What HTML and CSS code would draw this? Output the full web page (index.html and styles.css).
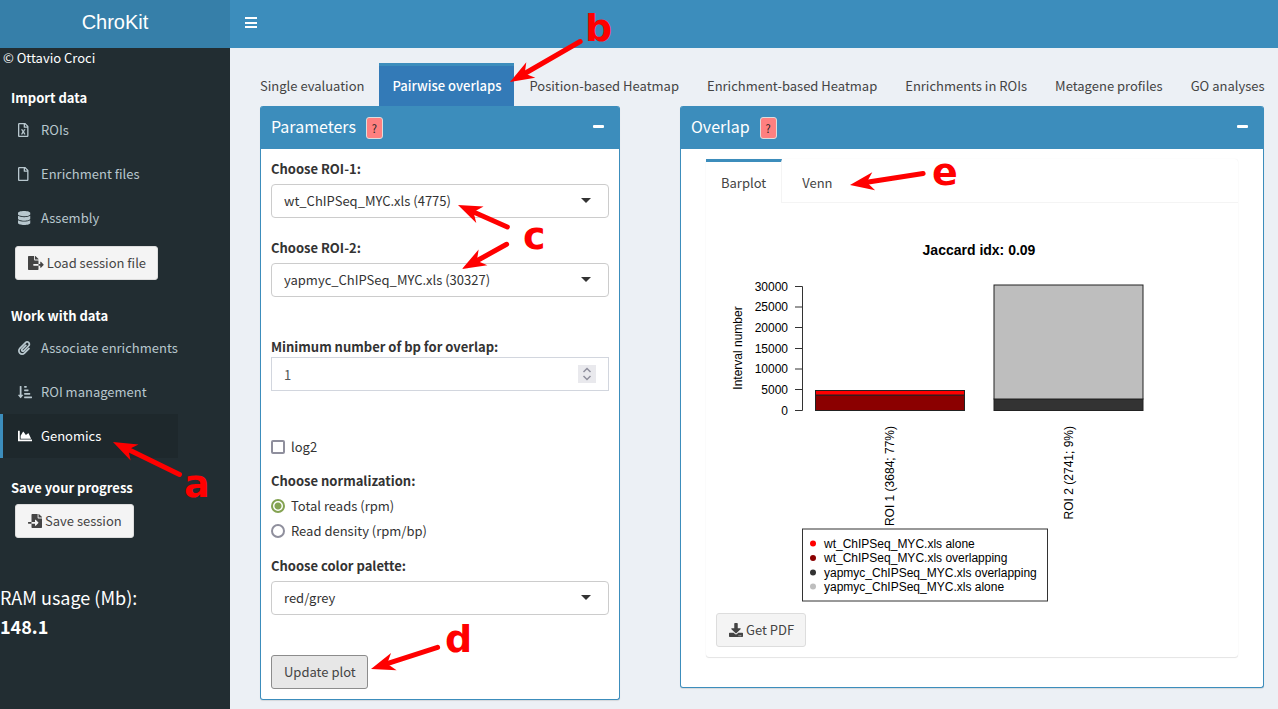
FILE: index.html
```html
<!DOCTYPE html>
<html lang="en">
<head>
<meta charset="utf-8">
<title>ChroKit</title>
<link rel="stylesheet" href="styles.css">
</head>
<body>
<header class="topbar">
  <div class="logo">ChroKit</div>
  <button class="menu-toggle" type="button" aria-label="Toggle navigation">
    <svg width="12" height="12" viewBox="0 0 12 12"><path d="M0 0h12v2H0zM0 5h12v2H0zM0 9h12v2H0z"/></svg>
  </button>
</header>
<div class="shell">
  <aside class="sidebar">
    <p class="copyright">© Ottavio Croci</p>
    <h2 class="side-title">Import data</h2>
    <nav class="side-nav">
      <a class="side-link" href="#rois"><svg class="icon" viewBox="0 0 384 512" preserveAspectRatio="xMinYMid"><path d="M369.9 97.9L286 14C277 5 264.8-.1 252.1-.1H48C21.5 0 0 21.5 0 48v416c0 26.5 21.5 48 48 48h288c26.5 0 48-21.5 48-48V131.900c0-12.700-5.100-25-14.100-34zM332.100 128H256V51.900l76.100 76.100zM48 464V48h160v104c0 13.300 10.700 24 24 24h104v288H48zm212-240h-28.800c-4.400 0-8.400 2.400-10.500 6.300-18 33.100-22.200 42.400-28.600 57.700-13.900-29.100-6.900-17.300-28.600-57.700-2.100-3.900-6.200-6.300-10.600-6.300H124c-9.300 0-15 10-10.400 18l46.300 78-46.300 78c-4.700 8 1.100 18 10.400 18h28.900c4.400 0 8.400-2.400 10.500-6.300 21.700-40 23-45 28.600-57.700 14.900 30.200 5.900 15.900 28.600 57.700 2.100 3.900 6.200 6.300 10.600 6.300H260c9.300 0 15-10 10.400-18L224 320c.7-1.100 30.300-50.500 46.300-78 4.700-8-1.100-18-10.300-18z"/></svg>ROIs</a>
      <a class="side-link" href="#enrichment"><svg class="icon" viewBox="0 0 384 512" preserveAspectRatio="xMinYMid"><path d="M369.900 97.900L286 14C277 5 264.800-.1 252.100-.1H48C21.500 0 0 21.500 0 48v416c0 26.500 21.500 48 48 48h288c26.500 0 48-21.500 48-48V131.900c0-12.700-5.100-25-14.100-34zM332.100 128H256V51.900l76.100 76.100zM48 464V48h160v104c0 13.300 10.700 24 24 24h104v288H48z"/></svg>Enrichment files</a>
      <a class="side-link" href="#assembly"><svg class="icon" viewBox="0 0 448 512" preserveAspectRatio="xMinYMid"><path d="M448 73.143v45.714C448 159.143 347.667 192 224 192S0 159.143 0 118.857V73.143C0 32.857 100.333 0 224 0s224 32.857 224 73.143zM448 176v102.857C448 319.143 347.667 352 224 352S0 319.143 0 278.857V176c48.125 33.143 136.208 48.572 224 48.572S399.874 209.143 448 176zm0 160v102.857C448 479.143 347.667 512 224 512S0 479.143 0 438.857V336c48.125 33.143 136.208 48.572 224 48.572S399.874 369.143 448 336z"/></svg>Assembly</a>
    </nav>
    <button class="btn side-btn" type="button"><svg class="icon" viewBox="0 0 576 512"><path d="M384 121.900c0-6.300-2.500-12.400-7-16.900L279.100 7c-4.500-4.500-10.600-7-17-7H256v128h128zM571 308l-95.700-96.400c-10.100-10.100-27.400-3-27.400 11.300V288h-64v64h64v65.200c0 14.300 17.300 21.400 27.400 11.300L571 332c6.600-6.600 6.600-17.400 0-24zm-379 28v-32c0-8.800 7.200-16 16-16h176V160H248c-13.200 0-24-10.800-24-24V0H24C10.700 0 0 10.700 0 24v464c0 13.300 10.700 24 24 24h336c13.300 0 24-10.700 24-24V352H208c-8.800 0-16-7.200-16-16z"/></svg>Load session file</button>
    <h2 class="side-title work-title">Work with data</h2>
    <nav class="side-nav">
      <a class="side-link" href="#associate"><svg class="icon" viewBox="0 0 448 512" preserveAspectRatio="xMinYMid"><path d="M43.246 466.142c-58.430-60.289-57.341-157.511 1.386-217.581L254.392 34c44.316-45.332 116.351-45.336 160.671 0 43.890 44.894 43.943 117.329 0 162.276L232.214 383.128c-29.855 30.537-78.633 30.111-107.982-.998-28.275-29.970-27.368-77.473 1.452-106.953l143.743-146.835c6.182-6.314 16.312-6.422 22.626-.241l22.861 22.379c6.315 6.182 6.422 16.312.241 22.626L171.427 319.927c-4.932 5.045-5.236 13.428-.648 18.292 4.372 4.634 11.245 4.711 15.688.165l182.849-186.851c19.613-20.062 19.613-52.725-.011-72.798-19.189-19.627-49.957-19.637-69.154 0L90.390 293.295c-34.763 35.560-35.299 93.120-1.191 128.313 34.010 35.093 88.985 35.137 123.058.286l172.060-175.999c6.177-6.319 16.307-6.433 22.626-.256l22.877 22.364c6.319 6.177 6.434 16.307.256 22.626l-172.060 175.998c-59.576 60.938-155.943 60.216-214.770-.485z"/></svg>Associate enrichments</a>
      <a class="side-link" href="#management"><svg class="icon" viewBox="0 0 512 512" preserveAspectRatio="xMinYMid"><path d="M240 96h64a16 16 0 0 0 16-16V48a16 16 0 0 0-16-16h-64a16 16 0 0 0-16 16v32a16 16 0 0 0 16 16zm0 128h128a16 16 0 0 0 16-16v-32a16 16 0 0 0-16-16H240a16 16 0 0 0-16 16v32a16 16 0 0 0 16 16zm256 192H240a16 16 0 0 0-16 16v32a16 16 0 0 0 16 16h256a16 16 0 0 0 16-16v-32a16 16 0 0 0-16-16zm-256-64h192a16 16 0 0 0 16-16v-32a16 16 0 0 0-16-16H240a16 16 0 0 0-16 16v32a16 16 0 0 0 16 16zm-64 0h-48V48a16 16 0 0 0-16-16H80a16 16 0 0 0-16 16v304H16c-14.190 0-21.370 17.240-11.290 27.310l80 96a16 16 0 0 0 22.620 0l80-96C197.350 369.260 190.220 352 176 352z"/></svg>ROI management</a>
      <a class="side-link active" href="#genomics"><svg class="icon" viewBox="0 0 512 512" preserveAspectRatio="xMinYMid"><path d="M500 384c6.600 0 12 5.400 12 12v40c0 6.600-5.400 12-12 12H12c-6.600 0-12-5.400-12-12V76c0-6.600 5.400-12 12-12h40c6.600 0 12 5.400 12 12v308h436zM372.700 159.500L288 216l-85.300-113.700c-5.100-6.800-15.500-6.300-19.900 1L96 248v104h384l-89.900-187.800c-3.200-6.500-11.400-8.700-17.400-4.700z"/></svg>Genomics</a>
    </nav>
    <h2 class="side-title">Save your progress</h2>
    <button class="btn side-btn" type="button"><svg class="icon" viewBox="0 0 512 512"><path d="M16 288c-8.800 0-16 7.200-16 16v32c0 8.800 7.200 16 16 16h112v-64zm489-183L407.100 7c-4.500-4.500-10.600-7-17-7H384v128h128v-6.100c0-6.300-2.500-12.400-7-16.900zm-153 31V0H152c-13.300 0-24 10.700-24 24v264h128v-65.200c0-14.300 17.300-21.400 27.400-11.300L379 308c6.600 6.700 6.600 17.400 0 24l-95.700 96.400c-10.100 10.100-27.400 3-27.400-11.300V352H128v136c0 13.300 10.700 24 24 24h336c13.300 0 24-10.700 24-24V160H376c-13.200 0-24-10.800-24-24z"/></svg>Save session</button>
    <div class="ram">RAM usage (Mb):<br><strong>148.1</strong></div>
  </aside>
  <main class="content">
    <nav class="tabs">
      <a class="tab" href="#single">Single evaluation</a>
      <a class="tab active" href="#pairwise">Pairwise overlaps</a>
      <a class="tab" href="#position">Position-based Heatmap</a>
      <a class="tab" href="#enrichment-heatmap">Enrichment-based Heatmap</a>
      <a class="tab" href="#enrichments">Enrichments in ROIs</a>
      <a class="tab" href="#metagene">Metagene profiles</a>
      <a class="tab" href="#go">GO analyses</a>
    </nav>
    <div class="panels">
      <section class="panel">
        <header class="panel-head">
          <h3 class="panel-title">Parameters</h3>
          <button class="help" type="button">?</button>
          <button class="collapse" type="button" aria-label="Collapse"></button>
        </header>
        <form class="params">
          <div class="field">
            <label class="label" for="roi1">Choose ROI-1:</label>
            <div class="select-wrap"><select class="control" id="roi1"><option>wt_ChIPSeq_MYC.xls (4775)</option></select></div>
          </div>
          <div class="field roi2-field">
            <label class="label" for="roi2">Choose ROI-2:</label>
            <div class="select-wrap"><select class="control" id="roi2"><option>yapmyc_ChIPSeq_MYC.xls (30327)</option></select></div>
          </div>
          <div class="field min-field">
            <label class="label" for="minbp">Minimum number of bp for overlap:</label>
            <div class="number-wrap">
              <input class="control number" id="minbp" type="number" value="1">
              <svg class="spinner" viewBox="0 0 18 18"><path d="M5.500 7L9 3.500 12.500 7M5.500 11L9 14.500l3.500-3.500"/></svg>
            </div>
          </div>
          <label class="choice"><input class="check" type="checkbox">log2</label>
          <fieldset class="radios">
            <legend class="label">Choose normalization:</legend>
            <label class="choice"><input class="radio" type="radio" name="norm" checked>Total reads (rpm)</label>
            <label class="choice"><input class="radio" type="radio" name="norm">Read density (rpm/bp)</label>
          </fieldset>
          <div class="field">
            <label class="label" for="palette">Choose color palette:</label>
            <div class="select-wrap"><select class="control" id="palette"><option>red/grey</option></select></div>
          </div>
          <button class="btn update" type="button">Update plot</button>
        </form>
      </section>
      <section class="panel">
        <header class="panel-head">
          <h3 class="panel-title">Overlap</h3>
          <button class="help" type="button">?</button>
          <button class="collapse" type="button" aria-label="Collapse"></button>
        </header>
        <div class="results">
          <div class="tabbox">
            <nav class="inner-tabs">
              <a class="inner-tab active" href="#barplot">Barplot</a>
              <a class="inner-tab" href="#venn">Venn</a>
            </nav>
            <div class="plot-area">
              <svg class="plot" viewBox="0 0 512 400" role="img" aria-label="Interval overlap bar plot">
                <text class="plot-title" x="263" y="42" text-anchor="middle">Jaccard idx: 0.09</text>
                <g text-anchor="end">
                  <text x="72" y="78">30000</text><text x="72" y="98">25000</text><text x="72" y="119">20000</text><text x="72" y="140">15000</text><text x="72" y="160">10000</text><text x="72" y="181">5000</text><text x="72" y="202">0</text>
                </g>
                <text transform="translate(26 135) rotate(-90)" text-anchor="middle">Interval number</text>
                <path class="axis" d="M79 73.500H86.500V197.500H79M79 94h7.500M79 114.500h7.500M79 135.500h7.500M79 156h7.500M79 176.500h7.500"/>
                <g class="bars">
                  <rect x="99.500" y="182" width="149" height="15.500" fill="#8b0000"/>
                  <rect x="99.500" y="177.500" width="149" height="4.500" fill="#f00"/>
                  <rect x="278" y="186" width="149" height="11.500" fill="#333"/>
                  <rect x="278" y="72" width="149" height="114" fill="#bebebe"/>
                </g>
                <g text-anchor="end">
                  <text transform="translate(178 213) rotate(-90)">ROI 1 (3684; 77%)</text>
                  <text transform="translate(357 213) rotate(-90)">ROI 2 (2741; 9%)</text>
                </g>
                <rect class="legend" x="86.500" y="316" width="245" height="72"/>
                <circle cx="97" cy="330.500" r="3" fill="#f00"/><text x="108" y="335">wt_ChIPSeq_MYC.xls alone</text>
                <circle cx="97" cy="345" r="3" fill="#8b0000"/><text x="108" y="349">wt_ChIPSeq_MYC.xls overlapping</text>
                <circle cx="97" cy="359.500" r="3" fill="#333"/><text x="108" y="364">yapmyc_ChIPSeq_MYC.xls overlapping</text>
                <circle cx="97" cy="373.500" r="3" fill="#bebebe"/><text x="108" y="378">yapmyc_ChIPSeq_MYC.xls alone</text>
              </svg>
              <button class="btn" type="button"><svg class="icon" viewBox="0 0 512 512"><path d="M216 0h80c13.300 0 24 10.700 24 24v168h87.700c17.800 0 26.700 21.500 14.100 34.100L269.700 378.300c-7.500 7.500-19.800 7.500-27.300 0L90.100 226.100c-12.600-12.600-3.700-34.100 14.100-34.100H192V24c0-13.300 10.700-24 24-24zm296 376v112c0 13.300-10.700 24-24 24H24c-13.300 0-24-10.700-24-24V376c0-13.300 10.700-24 24-24h146.700l49 49c20.100 20.100 52.500 20.100 72.600 0l49-49H488c13.300 0 24 10.700 24 24zm-124 88c0-11-9-20-20-20s-20 9-20 20 9 20 20 20 20-9 20-20zm64 0c0-11-9-20-20-20s-20 9-20 20 9 20 20 20 20-9 20-20z"/></svg>Get PDF</button>
            </div>
          </div>
        </div>
      </section>
    </div>
  </main>
</div>
<svg class="annotations">
  <defs><path id="head" d="M0 0L24-9 17 0l7 9z"/></defs>
  <g transform="translate(113 442) rotate(26)"><path class="shaft" d="M17 0h57"/><use href="#head"/></g>
  <g transform="translate(510 82) rotate(-30)"><path class="shaft" d="M17 0h64"/><use href="#head"/></g>
  <g transform="translate(458 205) rotate(24)"><path class="shaft" d="M17 0h37"/><use href="#head"/></g>
  <g transform="translate(462 269) rotate(-29)"><path class="shaft" d="M17 0h34"/><use href="#head"/></g>
  <g transform="translate(371 669) rotate(-18)"><path class="shaft" d="M17 0h53"/><use href="#head"/></g>
  <g transform="translate(850 185) rotate(-9)"><path class="shaft" d="M17 0h57"/><use href="#head"/></g>
  <text x="184" y="497">a</text>
  <text x="585" y="41">b</text>
  <text x="523" y="249">c</text>
  <text x="445" y="652">d</text>
  <text x="932" y="185">e</text>
</svg>
</body>
</html>
```
FILE: styles.css
```css
*, *::before, *::after { box-sizing: border-box; }

body {
  position: relative;
  display: flex;
  flex-direction: column;
  min-height: 100vh;
  margin: 0;
  background: #ecf0f5;
  color: #333;
  font: 13px/20px "Source Sans Pro", "Noto Sans CJK JP", "Noto Sans", sans-serif;
}

a { color: inherit; text-decoration: none; }
button, input, select { font: inherit; color: inherit; }
h2, h3, p { margin: 0; }

.topbar { display: flex; height: 48px; background: #3c8dbc; color: #fff; }
.logo {
  width: 230px;
  background: #367fa9;
  font: 20px/44px "Liberation Sans", Arial, sans-serif;
  text-align: center;
}
.menu-toggle {
  display: flex;
  align-items: center;
  padding: 0 15px 2px;
  border: 0;
  background: none;
  fill: #fff;
}

.shell { display: flex; flex: 1; }
.sidebar { flex: 0 0 230px; background: #222d32; color: #fff; }
.copyright { padding: 0 3px; }
.side-title { padding: 20px 11px 0; font-size: 13px; line-height: 20px; font-weight: 700; }
.side-nav { width: 178px; }
.side-link {
  display: flex;
  align-items: center;
  height: 44px;
  padding-left: 15px;
  border-left: 3px solid transparent;
  color: #b8c7ce;
  white-space: nowrap;
}
.side-link.active { border-color: #3c8dbc; background: #1e282c; color: #fff; }
.icon { height: 14px; fill: currentColor; }
.side-link .icon { flex: none; width: 23px; }

.btn {
  display: inline-flex;
  align-items: center;
  gap: 3px;
  height: 34px;
  padding: 0 11px 0 12px;
  border: 1px solid #ddd;
  border-radius: 3px;
  background: #f4f4f4;
  color: #444;
}
.side-btn { margin: 6px 15px 0; }
.work-title { padding-top: 26px; }
.ram { margin-top: 45px; font-size: 18px; line-height: 29px; }

.content { flex: 1; min-width: 0; padding-top: 15px; }
.tabs { display: flex; gap: 2px; padding-left: 17px; }
.tab {
  padding: 10px 13px;
  border-top: 3px solid transparent;
  color: #444;
  white-space: nowrap;
}
.tab.active { border-color: #3c8dbc; background: #337ab7; color: #fff; font-weight: 500; }

.panels {
  display: grid;
  grid-template-columns: 360fr 584fr;
  gap: 60px;
  align-items: start;
  padding: 0 14px 9px 30px;
}
.panel {
  border: 1px solid #3c8dbc;
  border-top: 0;
  border-radius: 3px;
  background: #fff;
  box-shadow: 0 1px 1px rgba(0, 0, 0, 0.1);
}
.panel-head {
  display: flex;
  align-items: center;
  gap: 10px;
  height: 43px;
  padding: 0 15px 0 10px;
  border-radius: 2px 2px 0 0;
  background: #3c8dbc;
  color: #fff;
}
.panel-title { margin-bottom: 3px; font-size: 16px; line-height: 20px; font-weight: 400; }
.help {
  width: 17px;
  height: 22px;
  padding: 0;
  border: 1px solid #ddd;
  border-radius: 3px;
  background: #ff8080;
  color: #222;
  font-size: 11px;
  line-height: 20px;
}
.collapse { width: 11px; height: 3px; margin: 0 0 3px auto; padding: 0; border: 0; border-radius: 1px; background: #fff; }

.params { padding: 10px; }
.label { display: block; margin-bottom: 5px; padding: 0; font-weight: 700; }
.control {
  display: block;
  width: 100%;
  height: 34px;
  padding: 0 12px;
  border: 1px solid #ccc;
  border-radius: 4px;
  background: #fff;
  appearance: none;
}
.select-wrap, .number-wrap { position: relative; }
.select-wrap::after {
  content: "";
  position: absolute;
  top: 14px;
  right: 18px;
  border: 5px solid transparent;
  border-top-color: #333;
  border-bottom: 0;
  pointer-events: none;
}
.roi2-field { margin-top: 20px; }
.min-field { margin: 40px 0 46px; }
.min-field .label { margin-bottom: 0; }
.number { border-color: #d2d6de; border-radius: 0; color: #555; appearance: textfield; }
.number::-webkit-inner-spin-button { appearance: none; }
.spinner {
  position: absolute;
  top: 8px;
  right: 13px;
  width: 18px;
  height: 18px;
  background: #e9e9ed;
  fill: none;
  stroke: #8f8f9d;
  stroke-width: 1.5;
  pointer-events: none;
}
.choice { display: flex; align-items: center; gap: 6px; }
.check, .radio { width: 14px; height: 14px; margin: 0; border: 2px solid #8f8f9d; background: #fff; appearance: none; }
.check { border-radius: 2px; }
.radio { border-radius: 50%; }
.radio:checked { border-color: #84a352; background: radial-gradient(circle, #84a352 3px, #fff 4px); }
.radios { margin: 14px 0 15px; padding: 0; border: 0; }
.radios .choice + .choice { margin-top: 5px; }
.update { margin-top: 40px; border-color: #8c8c8c; background: #e7e7e7; }

.results { padding: 10px 25px 30px; }
.tabbox { border-radius: 3px; box-shadow: 0 1px 1px rgba(0, 0, 0, 0.1), 0 0 1px rgba(0, 0, 0, 0.1); }
.inner-tabs { display: flex; gap: 5px; border-bottom: 1px solid #f4f4f4; }
.inner-tab { padding: 11px 15px 9px; border-top: 3px solid transparent; color: #444; }
.inner-tab.active { margin-bottom: -1px; padding-bottom: 10px; border-top-color: #3c8dbc; border-right: 1px solid #f4f4f4; background: #fff; }
.plot-area { padding: 10px; }
.plot { display: block; width: 100%; height: 400px; font: 12px "Liberation Sans", Arial, sans-serif; fill: #000; }
.plot-title { font-size: 14px; font-weight: 700; }
.axis, .legend { fill: none; stroke: #333; }
.bars { stroke: #222; }

.annotations {
  position: absolute;
  top: 0;
  left: 0;
  width: 100%;
  height: 100%;
  fill: #f00;
  font: 700 38px "DejaVu Sans", sans-serif;
  pointer-events: none;
}
.shaft { stroke: #f00; stroke-width: 5; stroke-linecap: round; }
```
